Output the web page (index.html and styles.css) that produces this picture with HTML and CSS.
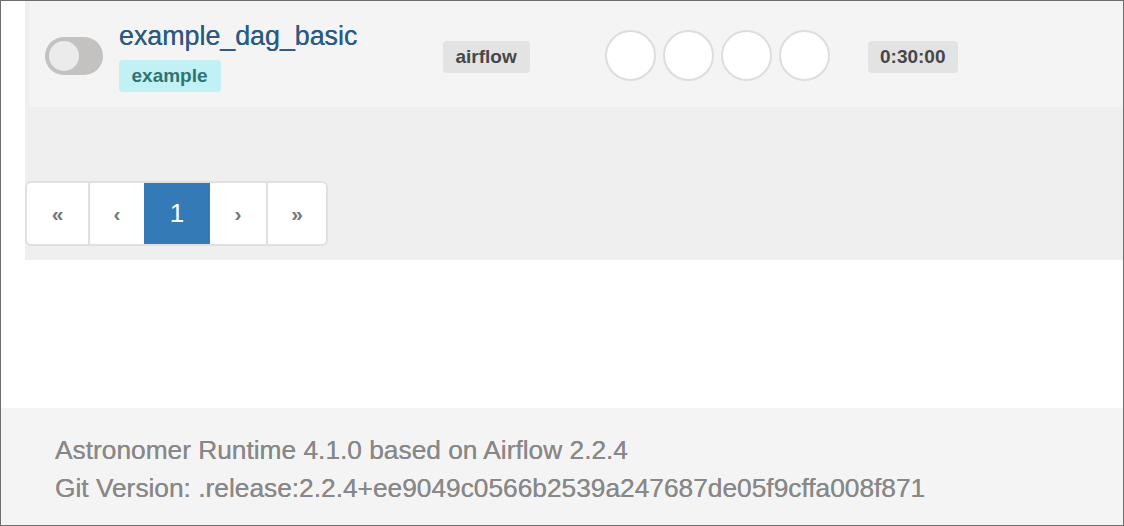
FILE: index.html
```html
<!DOCTYPE html>
<html>
<head>
<meta charset="utf-8">
<link rel="stylesheet" href="styles.css">
</head>
<body>
<div class="frame">
  <main class="content">
    <div class="panel">
      <div class="dag-row">
        <div class="col-toggle">
          <span class="switch"><span class="knob"></span></span>
        </div>
        <div class="col-name">
          <a class="dag-title">example_dag_basic</a>
          <span class="tag">example</span>
        </div>
        <div class="col-owner">
          <span class="badge">airflow</span>
        </div>
        <div class="col-runs">
          <span class="run"></span><span class="run"></span><span class="run"></span><span class="run"></span>
        </div>
        <div class="col-schedule">
          <span class="badge">0:30:00</span>
        </div>
      </div>
      <nav class="pagination">
        <a class="page first">&laquo;</a>
        <a class="page prev">&lsaquo;</a>
        <a class="page active">1</a>
        <a class="page next">&rsaquo;</a>
        <a class="page last">&raquo;</a>
      </nav>
    </div>
  </main>
  <footer class="footer">
    <div>Astronomer Runtime 4.1.0 based on Airflow 2.2.4</div>
    <div>Git Version: .release:2.2.4+ee9049c0566b2539a247687de05f9cffa008f871</div>
  </footer>
</div>
</body>
</html>
```
FILE: styles.css
```css
* { box-sizing: border-box; }
html, body { margin: 0; padding: 0; background: #fff; }
body { font-family: "Liberation Sans", Arial, Helvetica, sans-serif; }

.frame {
  width: 1124px;
  height: 526px;
  border: 1px solid #6e6e6e;
  display: flex;
  flex-direction: column;
  background: #fff;
}

.content {
  flex: 1;
  padding-left: 24px;
}

.panel {
  background: #efefef;
  padding-bottom: 14px;
}

.dag-row {
  margin-left: 4px;
  height: 106px;
  background: #f4f4f4;
  display: flex;
  align-items: center;
  padding: 4px 0 0 16px;
}

.col-toggle { width: 74px; display: flex; }
.switch {
  width: 58px;
  height: 38px;
  border-radius: 19px;
  background: #c3c2c0;
  padding: 4px;
  display: flex;
}
.knob {
  width: 30px;
  height: 30px;
  border-radius: 50%;
  background: #ebebeb;
}

.col-name {
  width: 324px;
  display: flex;
  flex-direction: column;
  align-items: flex-start;
}
.dag-title {
  font-size: 26.8px;
  line-height: 32px;
  color: #2d5a81;
  text-shadow: 0 0 0.4px #2d5a81;
}
.tag {
  margin-top: 8px;
  height: 32px;
  line-height: 32px;
  padding: 0 13px 0 12.5px;
  border-radius: 4px;
  background: #c1f1f4;
  color: #2f7473;
  font-weight: bold;
  font-size: 19px;
}

.col-owner { width: 162px; display: flex; padding-top: 2px; }
.badge {
  height: 32px;
  line-height: 32px;
  padding: 0 12.5px 0 12px;
  border-radius: 4px;
  background: #e3e3e3;
  color: #474747;
  font-weight: bold;
  font-size: 19px;
}
.col-owner .badge { padding: 0 13px 0 12.5px; }

.col-runs {
  width: 263px;
  display: flex;
  gap: 7px;
  margin-top: -2px;
}
.run {
  width: 51px;
  height: 51px;
  border-radius: 50%;
  background: #fff;
  border: 2px solid #dddddd;
}

.col-schedule { display: flex; padding-top: 2px; }

.pagination {
  display: flex;
  margin-top: 74px;
  width: 303px;
  height: 65px;
  border: 2px solid #e0e0e0;
  border-radius: 6px;
  background: #fff;
  overflow: hidden;
}
.page {
  display: flex;
  align-items: center;
  justify-content: center;
  color: #777;
  font-size: 21px;
  font-weight: bold;
  border-left: 2px solid #e0e0e0;
}
.page.first { width: 61px; border-left: 0; }
.page.prev { width: 56px; }
.page.active {
  width: 66px;
  background: #337ab7;
  color: #fff;
  font-weight: normal;
  font-size: 26px;
  border-left: 0;
  margin: -2px 0;
}
.page.next { width: 56px; border-left: 0; }
.page.last { width: 60px; }

.footer {
  height: 117px;
  background: #f4f4f4;
  padding: 23px 0 0 54px;
  color: #888;
  font-size: 26.3px;
  line-height: 38px;
  text-shadow: 0 0 0.3px #888;
}
```
